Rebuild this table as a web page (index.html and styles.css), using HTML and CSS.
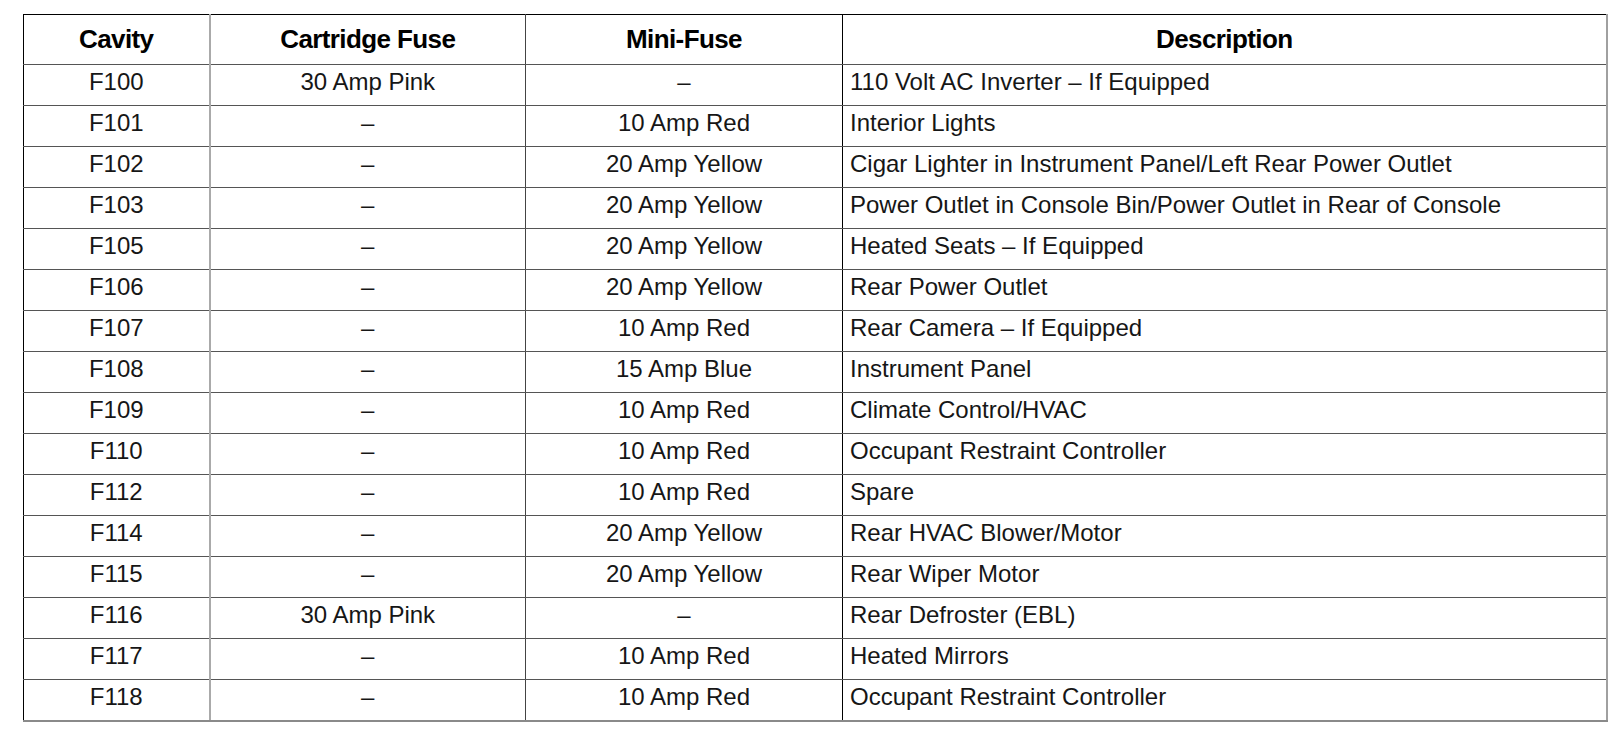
FILE: index.html
```html
<!DOCTYPE html>
<html>
<head>
<meta charset="utf-8">
<link rel="stylesheet" href="styles.css">
</head>
<body>
<table class="fuse-table">
  <colgroup>
    <col class="c-cavity">
    <col class="c-cart">
    <col class="c-mini">
    <col class="c-desc">
  </colgroup>
  <thead>
    <tr>
      <th>Cavity</th>
      <th>Cartridge Fuse</th>
      <th>Mini-Fuse</th>
      <th>Description</th>
    </tr>
  </thead>
  <tbody>
    <tr><td>F100</td><td>30 Amp Pink</td><td>–</td><td class="desc">110 Volt AC Inverter – If Equipped</td></tr>
    <tr><td>F101</td><td>–</td><td>10 Amp Red</td><td class="desc">Interior Lights</td></tr>
    <tr><td>F102</td><td>–</td><td>20 Amp Yellow</td><td class="desc">Cigar Lighter in Instrument Panel/Left Rear Power Outlet</td></tr>
    <tr><td>F103</td><td>–</td><td>20 Amp Yellow</td><td class="desc">Power Outlet in Console Bin/Power Outlet in Rear of Console</td></tr>
    <tr><td>F105</td><td>–</td><td>20 Amp Yellow</td><td class="desc">Heated Seats – If Equipped</td></tr>
    <tr><td>F106</td><td>–</td><td>20 Amp Yellow</td><td class="desc">Rear Power Outlet</td></tr>
    <tr><td>F107</td><td>–</td><td>10 Amp Red</td><td class="desc">Rear Camera – If Equipped</td></tr>
    <tr class="dark-top"><td>F108</td><td>–</td><td>15 Amp Blue</td><td class="desc">Instrument Panel</td></tr>
    <tr><td>F109</td><td>–</td><td>10 Amp Red</td><td class="desc">Climate Control/HVAC</td></tr>
    <tr><td>F110</td><td>–</td><td>10 Amp Red</td><td class="desc">Occupant Restraint Controller</td></tr>
    <tr><td>F112</td><td>–</td><td>10 Amp Red</td><td class="desc">Spare</td></tr>
    <tr><td>F114</td><td>–</td><td>20 Amp Yellow</td><td class="desc">Rear HVAC Blower/Motor</td></tr>
    <tr><td>F115</td><td>–</td><td>20 Amp Yellow</td><td class="desc">Rear Wiper Motor</td></tr>
    <tr><td>F116</td><td>30 Amp Pink</td><td>–</td><td class="desc">Rear Defroster (EBL)</td></tr>
    <tr><td>F117</td><td>–</td><td>10 Amp Red</td><td class="desc">Heated Mirrors</td></tr>
    <tr class="dark-top last"><td>F118</td><td>–</td><td>10 Amp Red</td><td class="desc">Occupant Restraint Controller</td></tr>
  </tbody>
</table>
</body>
</html>
```
FILE: styles.css
```css
html, body {
  margin: 0;
  padding: 0;
  background: #ffffff;
}

body {
  padding: 14px 0 0 23px;
  font-family: "Liberation Sans", Arial, sans-serif;
  color: #161616;
}

.fuse-table {
  border-collapse: collapse;
  table-layout: fixed;
  width: 1583px;
  border-top: 1px solid #000;
  border-left: 1px solid #000;
  border-right: 2px solid #a0a0a0;
  border-bottom: 2px solid #8a8a8a;
}

.c-cavity { width: 186px; }
.c-cart { width: 316px; }
.c-mini { width: 317px; }
.c-desc { width: 764px; }

.fuse-table th,
.fuse-table td {
  border-top: 1px solid #555;
  border-bottom: 1px solid #555;
  text-align: center;
  vertical-align: middle;
  white-space: nowrap;
  overflow: hidden;
}

.fuse-table th {
  height: 50px;
  padding: 0;
  box-sizing: border-box;
  font-weight: bold;
  font-size: 26px;
  letter-spacing: -0.6px;
  color: #000;
  border-top: 1px solid #000;
}

.fuse-table td {
  height: 41px;
  padding: 0 0 6px 0;
  box-sizing: border-box;
  font-size: 24px;
}

.fuse-table th:nth-child(1),
.fuse-table td:nth-child(1) {
  border-right: 2px solid #aaaaaa;
}

.fuse-table th:nth-child(2),
.fuse-table td:nth-child(2) {
  border-right: 1px solid #444;
}

.fuse-table th:nth-child(3),
.fuse-table td:nth-child(3) {
  border-right: 1px solid #000;
}

.fuse-table td.desc {
  text-align: left;
  padding-left: 7px;
}

.fuse-table tr.dark-top td {
  border-top: 1px solid #000;
}

.fuse-table tr.last td {
  border-bottom: 2px solid #8a8a8a;
}
```
